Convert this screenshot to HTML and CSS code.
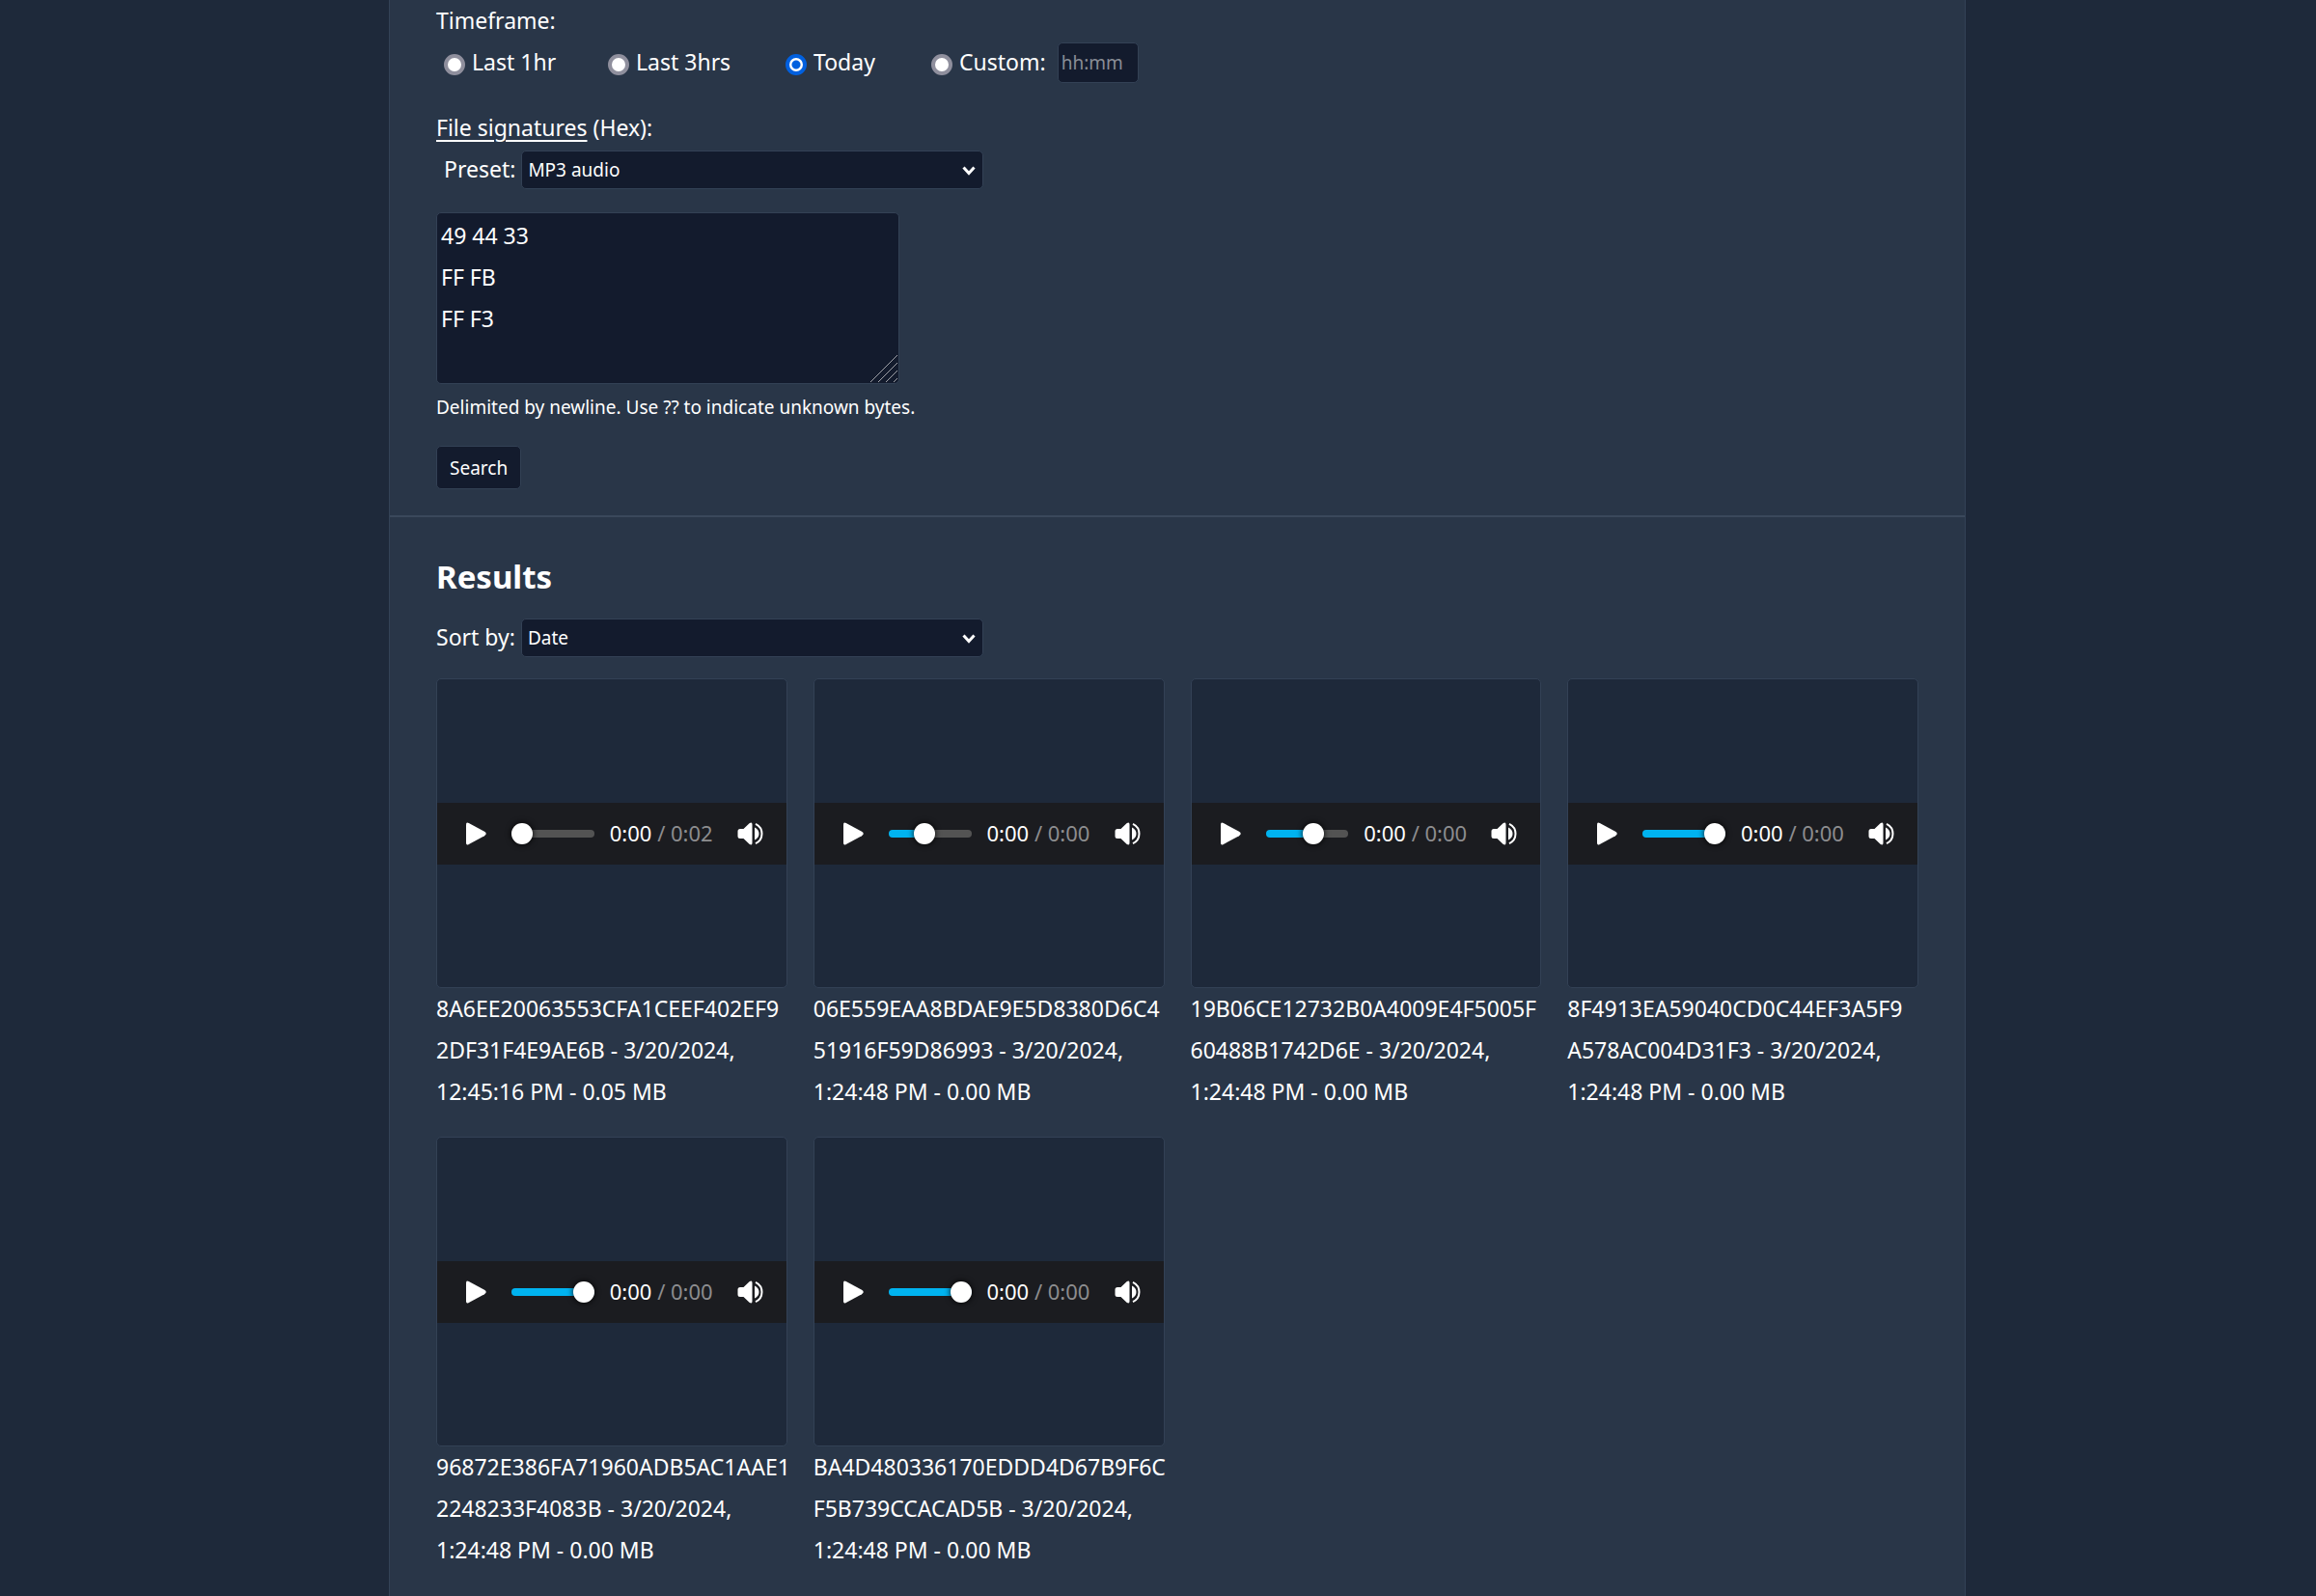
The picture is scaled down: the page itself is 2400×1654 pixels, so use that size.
FILE: index.html
```html
<!DOCTYPE html>
<html lang="en">
<head>
<meta charset="utf-8">
<title>Media search</title>
<link rel="stylesheet" href="styles.css">
</head>
<body>
<svg class="sprite" aria-hidden="true">
  <symbol id="play" viewBox="0 0 22 24"><path d="M1 2.500Q1 -0.500 3.800 1L20 9.800Q23.500 12 20 14.200L3.800 23Q1 24.500 1 21.500Z"/></symbol>
  <symbol id="volume" viewBox="0 0 27 24"><path d="M3 7H6.500L12.500 1.200Q15.500 -0.800 15.500 2.500V21.500Q15.500 24.800 12.500 22.800L6.500 17H3Q0.500 17 0.500 14.500V9.500Q0.500 7 3 7Z"/><path d="M18 5.500Q22.500 7.800 22.500 12T18 18.500Z"/><path class="wave" d="M19 1.800Q25.500 5 25.500 12T19 22.200"/></symbol>
  <symbol id="chevron" viewBox="0 0 14 10"><path d="M1.500 1.500L7 7.500L12.500 1.500"/></symbol>
</svg>
<main class="panel">
  <form class="search">
    <fieldset class="timeframe">
      <legend>Timeframe:</legend>
      <div class="options">
        <label class="option"><input class="radio" type="radio" name="timeframe">Last 1hr</label>
        <label class="option"><input class="radio" type="radio" name="timeframe">Last 3hrs</label>
        <label class="option"><input class="radio" type="radio" name="timeframe" checked>Today</label>
        <div class="custom">
          <label class="option"><input class="radio" type="radio" name="timeframe">Custom:</label>
          <input class="field time-field" type="text" placeholder="hh:mm" aria-label="Custom timeframe">
        </div>
      </div>
    </fieldset>
    <div class="signatures">
      <div><a href="#signatures">File signatures</a> (Hex):</div>
      <div class="row preset">
        <label for="preset">Preset:</label>
        <div class="select">
          <select class="field" id="preset"><option>MP3 audio</option></select>
          <svg class="chevron" aria-hidden="true"><use href="#chevron"/></svg>
        </div>
      </div>
    </div>
    <div class="hex">
      <textarea class="field" aria-label="File signatures in hex">49 44 33
FF FB
FF F3</textarea>
      <svg class="grip" viewBox="0 0 28 28" aria-hidden="true"><path d="M0 28L28 0M8 28L28 8M16 28L28 16M24 28L28 24"/></svg>
    </div>
    <p class="hint">Delimited by newline. Use ?? to indicate unknown bytes.</p>
    <button class="field submit" type="button">Search</button>
  </form>
  <section class="results">
    <h2>Results</h2>
    <div class="row">
      <label for="sort">Sort by:</label>
      <div class="select">
        <select class="field" id="sort"><option>Date</option></select>
        <svg class="chevron" aria-hidden="true"><use href="#chevron"/></svg>
      </div>
    </div>
    <div class="grid">
      <article>
        <div class="preview"><div class="player">
          <button class="icon play" type="button" aria-label="Play"><svg><use href="#play"/></svg></button>
          <input class="track" type="range" aria-label="Position" value="0" style="--v:0%">
          <div class="time">0:00 <span>/ 0:02</span></div>
          <button class="icon volume" type="button" aria-label="Mute"><svg><use href="#volume"/></svg></button>
        </div></div>
        <p>8A6EE20063553CFA1CEEF402EF9<wbr>2DF31F4E9AE6B - 3/20/2024, 12:45:16 PM - 0.05 MB</p>
      </article>
      <article>
        <div class="preview"><div class="player">
          <button class="icon play" type="button" aria-label="Play"><svg><use href="#play"/></svg></button>
          <input class="track" type="range" aria-label="Position" value="41" style="--v:41%">
          <div class="time">0:00 <span>/ 0:00</span></div>
          <button class="icon volume" type="button" aria-label="Mute"><svg><use href="#volume"/></svg></button>
        </div></div>
        <p>06E559EAA8BDAE9E5D8380D6C4<wbr>51916F59D86993 - 3/20/2024, 1:24:48 PM - 0.00 MB</p>
      </article>
      <article>
        <div class="preview"><div class="player">
          <button class="icon play" type="button" aria-label="Play"><svg><use href="#play"/></svg></button>
          <input class="track" type="range" aria-label="Position" value="60" style="--v:60%">
          <div class="time">0:00 <span>/ 0:00</span></div>
          <button class="icon volume" type="button" aria-label="Mute"><svg><use href="#volume"/></svg></button>
        </div></div>
        <p>19B06CE12732B0A4009E4F5005F<wbr>60488B1742D6E - 3/20/2024, 1:24:48 PM - 0.00 MB</p>
      </article>
      <article>
        <div class="preview"><div class="player">
          <button class="icon play" type="button" aria-label="Play"><svg><use href="#play"/></svg></button>
          <input class="track" type="range" aria-label="Position" value="100" style="--v:100%">
          <div class="time">0:00 <span>/ 0:00</span></div>
          <button class="icon volume" type="button" aria-label="Mute"><svg><use href="#volume"/></svg></button>
        </div></div>
        <p>8F4913EA59040CD0C44EF3A5F9<wbr>A578AC004D31F3 - 3/20/2024, 1:24:48 PM - 0.00 MB</p>
      </article>
      <article>
        <div class="preview"><div class="player">
          <button class="icon play" type="button" aria-label="Play"><svg><use href="#play"/></svg></button>
          <input class="track" type="range" aria-label="Position" value="100" style="--v:100%">
          <div class="time">0:00 <span>/ 0:00</span></div>
          <button class="icon volume" type="button" aria-label="Mute"><svg><use href="#volume"/></svg></button>
        </div></div>
        <p>96872E386FA71960ADB5AC1AAE1<wbr>2248233F4083B - 3/20/2024, 1:24:48 PM - 0.00 MB</p>
      </article>
      <article>
        <div class="preview"><div class="player">
          <button class="icon play" type="button" aria-label="Play"><svg><use href="#play"/></svg></button>
          <input class="track" type="range" aria-label="Position" value="100" style="--v:100%">
          <div class="time">0:00 <span>/ 0:00</span></div>
          <button class="icon volume" type="button" aria-label="Mute"><svg><use href="#volume"/></svg></button>
        </div></div>
        <p>BA4D480336170EDDD4D67B9F6C<wbr>F5B739CCACAD5B - 3/20/2024, 1:24:48 PM - 0.00 MB</p>
      </article>
    </div>
  </section>
</main>
</body>
</html>
```
FILE: styles.css
```css
* { box-sizing: border-box; }

body {
  margin: 0;
  padding-left: 40px;
  background: #1e293a;
  color: #fff;
  font: 23px/43px "Noto Sans", "Open Sans", sans-serif;
}

p, h2 { margin: 0; }
a { color: inherit; text-decoration-thickness: 2px; text-underline-offset: 4px; }

.sprite { display: block; width: 0; height: 0; }

.panel {
  max-width: 1634px;
  min-height: 100vh;
  margin: 0 auto;
  border: solid #334256;
  border-width: 0 1px;
  background: #293648;
}

.search {
  display: flex;
  flex-direction: column;
  align-items: flex-start;
  padding: 0 48px 27px;
  border-bottom: 2px solid #3a485b;
}

.field {
  border: 1px solid #334155;
  border-radius: 5px;
  background: #131b2d;
  color: #fff;
  font: 19px/28px "Noto Sans", "Open Sans", sans-serif;
}

.timeframe { margin: 0; padding: 0; border: 0; }
.timeframe legend { padding: 0; }

.options {
  display: grid;
  grid-template-columns: 170px 184px 151px auto;
  padding-left: 8px;
}
.option { display: flex; align-items: center; gap: 7px; }
.custom { display: flex; align-items: center; gap: 12px; }

.radio {
  appearance: none;
  width: 22px;
  height: 22px;
  margin: 4px 0 0;
  border: 4px solid #8f8f9d;
  border-radius: 50%;
  background: #fff;
}
.radio:checked {
  border-color: #0060df;
  background: radial-gradient(circle, #0060df 4px, #fff 5px);
}

.time-field { width: 84px; height: 42px; padding: 0 3px; }
.time-field::placeholder { color: #898d96; opacity: 1; }

.signatures { margin-top: 25px; }
.row { display: flex; align-items: center; gap: 6px; }
.preset { padding-left: 8px; }

.select { position: relative; }
.select select { display: block; appearance: none; width: 479px; height: 40px; padding: 0 6px; }
.chevron {
  position: absolute;
  right: 8px;
  top: 16px;
  width: 14px;
  height: 10px;
  fill: none;
  stroke: #fff;
  stroke-width: 3;
  pointer-events: none;
}

.hex { position: relative; margin-top: 23px; }
.hex textarea {
  display: block;
  width: 480px;
  height: 178px;
  padding: 2px 4px;
  resize: none;
  font-size: 23px;
  line-height: 43px;
}
.grip {
  position: absolute;
  right: 2px;
  bottom: 2px;
  width: 28px;
  height: 28px;
  fill: none;
  stroke: #a0a2a8;
  pointer-events: none;
}

.hint { margin-top: 3px; font-size: 19px; }
.submit { height: 45px; margin-top: 18px; padding: 0 13px; }

.results { padding: 39px 48px 48px; }
.results h2 { margin-bottom: 19px; font-size: 33px; line-height: 45px; }

.grid {
  display: grid;
  grid-template-columns: repeat(4, minmax(0, 1fr));
  gap: 25px 27px;
  margin-top: 21px;
}

.preview {
  display: flex;
  align-items: center;
  height: 321px;
  border: 1px solid #334155;
  border-radius: 5px;
  background: #1e293a;
}
.player {
  display: flex;
  align-items: center;
  width: 100%;
  height: 64px;
  padding: 0 24px 0 29px;
  background: #1b1c20;
}

.icon { flex: none; padding: 0; border: 0; background: none; }
.icon svg { display: block; width: 100%; height: 100%; fill: #fff; }
.play { width: 22px; height: 24px; margin-right: 26px; }
.volume { width: 27px; height: 24px; margin-left: auto; }
.wave { fill: none; stroke: #fff; stroke-width: 2; }

.track {
  appearance: none;
  flex: 1;
  min-width: 0;
  height: 22px;
  margin: 0 16px 0 0;
  background: none;
}
.track::-webkit-slider-runnable-track {
  height: 8px;
  border-radius: 4px;
  background: linear-gradient(90deg, #00b3f0 var(--v), #535353 var(--v));
}
.track::-webkit-slider-thumb {
  appearance: none;
  width: 22px;
  height: 22px;
  margin-top: -7px;
  border-radius: 50%;
  background: #fff;
  box-shadow: 0 0 6px #000;
}

.time { flex: none; width: 132px; font-size: 22px; white-space: nowrap; }
.time span { color: #8d8d8f; }
```
